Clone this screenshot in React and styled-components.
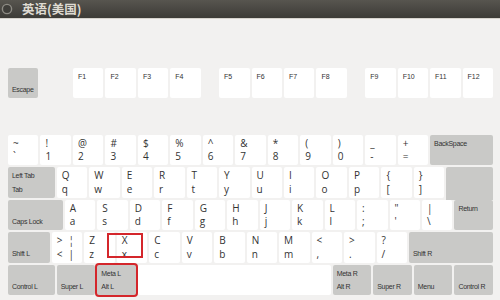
import styled, { createGlobalStyle } from 'styled-components'

const U = 32.47
const GAP = 2

const fnKeys = [
	['F1', 'F2', 'F3', 'F4'],
	['F5', 'F6', 'F7', 'F8'],
	['F9', 'F10', 'F11', 'F12'],
]

// each key: c = char columns [[top, bottom], ...], or mod key with t/b labels
const rows = [
	[
		{ c: [['~', '`']] }, { c: [['!', '1']] }, { c: [['@', '2']] }, { c: [['#', '3']] },
		{ c: [['$', '4']] }, { c: [['%', '5']] }, { c: [['^', '6']] }, { c: [['&', '7']] },
		{ c: [['*', '8']] }, { c: [['(', '9']] }, { c: [[')', '0']] }, { c: [['_', '-']] },
		{ c: [['+', '=']] },
		{ w: 2, mod: true, t: 'BackSpace' },
	],
	[
		{ w: 1.5, mod: true, t: 'Left Tab', b: 'Tab' },
		...'QWERTYUIOP'.split('').map(k => ({ c: [[k, k.toLowerCase()]] })),
		{ c: [['{', '[']] }, { c: [['}', ']']] },
		{ w: 1.5, mod: true, tall: true },
	],
	[
		{ w: 1.75, mod: true, b: 'Caps Lock' },
		...'ASDFGHJKL'.split('').map(k => ({ c: [[k, k.toLowerCase()]] })),
		{ c: [[':', ';']] }, { c: [['"', "'"]] }, { c: [['|', '\\']] },
		{ w: 1.25, mod: true, t: 'Return' },
	],
	[
		{ w: 1.35, mod: true, b: 'Shift L' },
		{ c: [['>', '<'], ['¦', '|']] },
		{ c: [['Z', 'z']] },
		{ c: [['X', 'x']], mark: true },
		...'CVBNM'.split('').map(k => ({ c: [[k, k.toLowerCase()]] })),
		{ c: [['<', ',']] }, { c: [['>', '.']] }, { c: [['?', '/']] },
		{ w: 2.65, mod: true, b: 'Shift R' },
	],
	[
		{ w: 1.5, mod: true, b: 'Control L' },
		{ w: 1.25, mod: true, b: 'Super L' },
		{ w: 1.25, mod: true, t: 'Meta L', b: 'Alt L', outline: true },
		{ w: 6 },
		{ w: 1.25, mod: true, t: 'Meta R', b: 'Alt R' },
		{ w: 1.25, mod: true, b: 'Super R' },
		{ w: 1.25, mod: true, b: 'Menu' },
		{ w: 1.25, mod: true, b: 'Control R' },
	],
]

function CloseIcon() {
	return (
		<svg width="12" height="12" viewBox="0 0 12 12">
			<circle cx="6" cy="6" r="4.6" fill="#3f3e3a" stroke="#8d8b84" strokeWidth="1.4" />
		</svg>
	)
}

function KeyCap({ k }) {
	if (k.c) {
		return (
			<Key $w={1} $outline={k.outline}>
				{k.c.map((col, i) => (
					<Col key={i}>
						<CharLabel>{col[0]}</CharLabel>
						<CharLabel>{col[1]}</CharLabel>
					</Col>
				))}
				{k.mark && <Mark />}
			</Key>
		)
	}
	return (
		<Key $w={k.w} $mod={k.mod} $tall={k.tall} $outline={k.outline}>
			{k.mod && (
				<Col>
					<ModLabel>{k.t}</ModLabel>
					<ModLabel>{k.b}</ModLabel>
				</Col>
			)}
		</Key>
	)
}

export default function App() {
	return (
		<>
			<GlobalStyle />
			<Window>
				<TitleBar>
					<CloseIcon />
					<Title>英语(美国)</Title>
				</TitleBar>
				<Board>
					<FnRow>
						<KeyCap k={{ w: 1, mod: true, b: 'Escape' }} />
						<Spacer $w={1} />
						{fnKeys.map((group, gi) => (
							<Group key={gi} $first={gi === 0}>
								{group.map(f => (
									<Key key={f} $w={1}>
										<FnLabel>{f}</FnLabel>
									</Key>
								))}
							</Group>
						))}
					</FnRow>
					<Rows>
						{rows.map((row, ri) => (
							<Row key={ri}>
								{row.map((k, i) => (
									<KeyCap key={i} k={k} />
								))}
							</Row>
						))}
					</Rows>
				</Board>
			</Window>
		</>
	)
}

const GlobalStyle = createGlobalStyle`
	html, body {
		margin: 0;
		background: #f2f1f0;
	}
	* {
		box-sizing: border-box;
	}
`
const Window = styled.div`
	width: 500px;
	height: 300px;
	overflow: hidden;
	background: #f2f1f0;
	font-family: 'Open Sans', 'Liberation Sans', sans-serif;
`
const TitleBar = styled.div`
	height: 19px;
	display: flex;
	align-items: center;
	gap: 9px;
	padding-left: 1px;
	background: linear-gradient(#57554f, #3c3b37);
	border-bottom: 1px solid #d6d3cd;
`
const Title = styled.span`
	font-family: 'Noto Sans CJK SC', sans-serif;
	font-size: 12.5px;
	font-weight: 700;
	color: #dfdbd2;
	line-height: 1;
`
const Board = styled.div`
	padding: 49px 0 0 8px;
`
const FnRow = styled.div`
	display: flex;
	gap: ${GAP}px;
	height: ${U - GAP}px;
	margin-bottom: 36.5px;
`
const Group = styled.div`
	display: flex;
	gap: ${GAP}px;
	margin-left: ${p => (p.$first ? 0 : U / 2)}px;
`
const Spacer = styled.div`
	width: ${p => p.$w * U - GAP}px;
`
const Rows = styled.div`
	display: flex;
	flex-direction: column;
	gap: ${GAP}px;
`
const Row = styled.div`
	display: flex;
	align-items: flex-start;
	gap: ${GAP}px;
	height: ${U - GAP}px;
`
const Key = styled.div`
	position: relative;
	flex: none;
	display: flex;
	gap: 6px;
	width: ${p => p.$w * U - GAP}px;
	height: ${p => (p.$tall ? U : U - GAP)}px;
	padding: 2px ${p => (p.$mod ? 4 : 5)}px;
	background: ${p => (p.$mod ? '#c9c9c7' : '#ffffff')};
	border-radius: ${p => (p.$tall ? '2px 2px 0 0' : '2px')};
	box-shadow: ${p => (p.$outline ? '0 0 0 2px #d4262b' : 'none')};
`
const Col = styled.div`
	display: flex;
	flex-direction: column;
`
const CharLabel = styled.span`
	height: 13.5px;
	font-size: 10px;
	line-height: 13.5px;
	color: #333333;
`
const ModLabel = styled.span`
	height: 13.5px;
	font-family: 'Liberation Sans', sans-serif;
	font-size: 7px;
	letter-spacing: -0.3px;
	line-height: 13.5px;
	color: #333333;
	white-space: nowrap;
`
const FnLabel = styled.span`
	font-family: 'Liberation Sans', sans-serif;
	font-size: 7px;
	line-height: 13px;
	color: #333333;
`
const Mark = styled.div`
	position: absolute;
	left: -10px;
	top: 1px;
	width: 36px;
	height: 25px;
	border: 2px solid #d4262b;
`
